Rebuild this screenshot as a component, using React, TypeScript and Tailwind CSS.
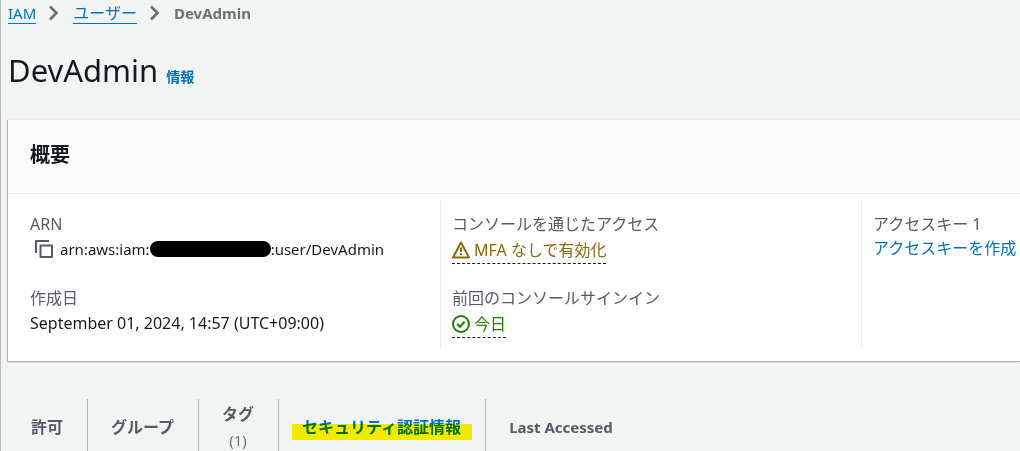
import type { ReactNode } from "react";
import clsx from "clsx";

const tabs = [
  { id: "permissions", label: "許可" },
  { id: "groups", label: "グループ" },
  { id: "tags", label: "タグ", count: 1 },
  { id: "security", label: "セキュリティ認証情報", active: true },
  { id: "last-accessed", label: "Last Accessed", latin: true },
];

function ChevronIcon() {
  return (
    <svg
      className="h-4 w-4 shrink-0"
      viewBox="0 0 16 16"
      fill="none"
      stroke="#687078"
      strokeWidth="2.6"
    >
      <path d="M4 1.5 10.5 8 4 14.5" />
    </svg>
  );
}

function CopyIcon() {
  return (
    <svg
      className="h-5 w-5"
      viewBox="0 0 20 20"
      fill="none"
      stroke="#545b64"
      strokeWidth="2"
      strokeLinejoin="round"
    >
      <path d="M2 14V2h13" />
      <path d="M6.5 6.5H18V18H6.5z" />
    </svg>
  );
}

function WarningIcon() {
  return (
    <svg
      className="h-[18px] w-[18px] shrink-0"
      viewBox="1 1 18 18"
      fill="none"
      stroke="currentColor"
      strokeWidth="2"
      strokeLinejoin="round"
    >
      <path d="M10 2.5 18 17.5H2z" />
      <path d="M10 7.5v4.5M10 13.2v2" />
    </svg>
  );
}

function SuccessIcon() {
  return (
    <svg
      className="h-[18px] w-[18px] shrink-0"
      viewBox="1 1 18 18"
      fill="none"
      stroke="currentColor"
      strokeWidth="2"
    >
      <circle cx="10" cy="10" r="8" />
      <path d="m6.2 10 2.8 2.8 4.6-5" />
    </svg>
  );
}

function Field({ label, children }: { label: string; children: ReactNode }) {
  return (
    <div>
      <dt className="text-[#545b64]">{label}</dt>
      <dd>{children}</dd>
    </div>
  );
}

function StatusButton({
  className,
  children,
}: {
  className: string;
  children: ReactNode;
}) {
  return (
    <button
      type="button"
      className={clsx(
        "flex h-7 items-center gap-1 border-b border-dashed border-[#16191f]",
        className,
      )}
    >
      {children}
    </button>
  );
}

export default function App() {
  return (
    <div className="h-screen overflow-hidden border-l border-[#b6babb] bg-[#f2f3f3] pl-[7px] font-['Noto_Sans','Noto_Sans_CJK_JP',sans-serif] text-base text-[#16191f]">
      <nav aria-label="Breadcrumb">
        <ol className="flex h-[26px] items-center gap-[11px]">
          <li className="flex items-center gap-2.5">
            <a href="#iam" className="border-b border-[#0073bb] text-[15px] leading-5 text-[#0073bb]">
              IAM
            </a>
            <ChevronIcon />
          </li>
          <li className="flex items-center gap-2.5">
            <a href="#users" className="border-b border-[#0073bb] leading-5 text-[#0073bb]">
              ユーザー
            </a>
            <ChevronIcon />
          </li>
          <li className="text-[15px] font-bold text-[#687078]" aria-current="page">
            DevAdmin
          </li>
        </ol>
      </nav>

      <header className="mt-[22px] mb-[26px] flex items-baseline gap-2">
        <h1 className="text-[31px] leading-[45px]">DevAdmin</h1>
        <a href="#info" className="text-sm font-bold text-[#0073bb]">
          情報
        </a>
      </header>

      <section className="border-t border-[#eaeded] bg-white shadow-[0_1px_1px_0_#aab7b8,-1px_1px_1px_0_#aab7b8]">
        <h2 className="h-[74px] border-b border-[#eaeded] bg-[#fafafa] px-[22px] pt-4 text-xl leading-[38px] font-bold">
          概要
        </h2>
        <dl className="grid grid-cols-[432fr_421fr_159fr] pt-1.5 pb-3">
          <div className="grid content-start gap-6 px-[22px] pt-3">
            <Field label="ARN">
              <div className="flex h-[26px] items-center text-[15px]">
                <button type="button" aria-label="Copy ARN" className="mr-1.5 ml-1">
                  <CopyIcon />
                </button>
                <span>arn:aws:iam:</span>
                <span className="h-4 w-[121px] rounded-full bg-black" />
                <span>:user/DevAdmin</span>
              </div>
            </Field>
            <Field label="作成日">
              <span className="leading-[26px]">
                September 01, 2024, 14:57 (UTC+09:00)
              </span>
            </Field>
          </div>
          <div className="grid h-[149px] content-start gap-[22px] border-l border-[#eaeded] px-[11px] pt-3">
            <Field label="コンソールを通じたアクセス">
              <StatusButton className="text-[#8d6605]">
                <WarningIcon />
                MFA なしで有効化
              </StatusButton>
            </Field>
            <Field label="前回のコンソールサインイン">
              <StatusButton className="text-[#1d8102]">
                <SuccessIcon />
                今日
              </StatusButton>
            </Field>
          </div>
          <div className="border-l border-[#eaeded] pt-3 pl-[11px] whitespace-nowrap">
            <Field label="アクセスキー 1">
              <a href="#create-access-key" className="text-[#0073bb]">
                アクセスキーを作成
              </a>
            </Field>
          </div>
        </dl>
      </section>

      <div role="tablist" className="mt-[38px] flex h-14 font-bold text-[#545b64]">
        {tabs.map((tab) => (
          <button
            key={tab.id}
            type="button"
            role="tab"
            aria-selected={!!tab.active}
            className={clsx(
              "relative border-r border-[#aab7b8] pr-6 pl-[23px] leading-[26px] last:border-r-0",
              tab.latin && "text-[15px]",
            )}
          >
            <span className={clsx(tab.active && "text-[#0073bb]")}>{tab.label}</span>
            {tab.count && (
              <span className="block text-[15px] font-normal text-[#687078]">
                ({tab.count})
              </span>
            )}
            {tab.active && (
              <span className="absolute inset-x-[13px] top-[25px] h-4 bg-[#fff500] mix-blend-multiply" />
            )}
          </button>
        ))}
      </div>
    </div>
  );
}
